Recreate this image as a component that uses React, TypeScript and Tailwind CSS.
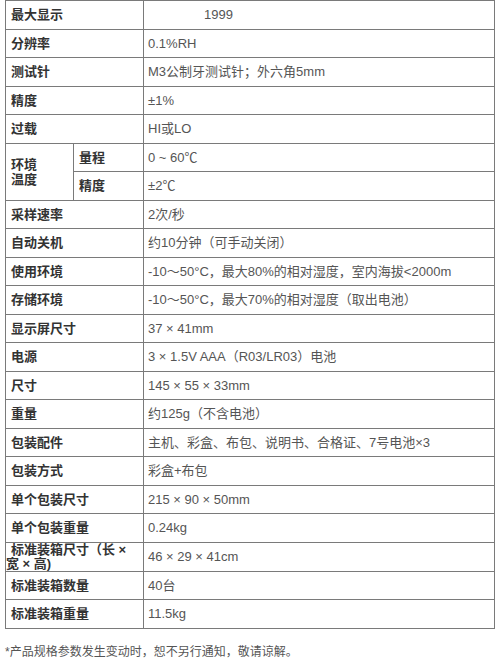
const ROWS: [string, string][] = [
  ['分辨率', '0.1%RH'],
  ['测试针', 'M3公制牙测试针；外六角5mm'],
  ['精度', '±1%'],
  ['过载', 'HI或LO'],
]

const ROWS2: [string, string][] = [
  ['采样速率', '2次/秒'],
  ['自动关机', '约10分钟（可手动关闭）'],
  ['使用环境', '-10～50°C，最大80%的相对湿度，室内海拔<2000m'],
  ['存储环境', '-10～50°C，最大70%的相对湿度（取出电池）'],
  ['显示屏尺寸', '37 × 41mm'],
  ['电源', '3 × 1.5V AAA（R03/LR03）电池'],
  ['尺寸', '145 × 55 × 33mm'],
  ['重量', '约125g（不含电池）'],
  ['包装配件', '主机、彩盒、布包、说明书、合格证、7号电池×3'],
  ['包装方式', '彩盒+布包'],
  ['单个包装尺寸', '215 × 90 × 50mm'],
  ['单个包装重量', '0.24kg'],
]

const ROWS3: [string, string][] = [
  ['标准装箱数量', '40台'],
  ['标准装箱重量', '11.5kg'],
]

const base = 'border border-[#7a7a7a] align-middle'
const th = `${base} pl-[5px] font-bold text-[#333] text-left`
const td = `${base} text-[#555]`

function Row({ label, value }: { label: string; value: string }) {
  return (
    <tr className="h-[28.5px]">
      <td colSpan={2} className={th}>
        {label}
      </td>
      <td className={`${td} pl-[4px]`}>{value}</td>
    </tr>
  )
}

export default function App() {
  return (
    <div className="w-[500px] h-[658px] bg-white overflow-hidden font-['Liberation_Sans','Noto_Sans_CJK_SC',sans-serif] text-[13px]">
      <table className="ml-[5px] w-[490px] border-collapse table-fixed">
        <colgroup>
          <col className="w-[68px]" />
          <col className="w-[70px]" />
          <col />
        </colgroup>
        <tbody>
          <tr className="h-[28.5px]">
            <td colSpan={2} className={th}>
              最大显示
            </td>
            <td className={`${td} pl-[60px]`}>1999</td>
          </tr>
          {ROWS.map(([l, v]) => (
            <Row key={l} label={l} value={v} />
          ))}
          <tr className="h-[28.5px]">
            <td rowSpan={2} className={`${th} leading-[15px]`}>
              环境
              <br />
              温度
            </td>
            <td className={th}>量程</td>
            <td className={`${td} pl-[4px]`}>0 ~ 60℃</td>
          </tr>
          <tr className="h-[28.5px]">
            <td className={th}>精度</td>
            <td className={`${td} pl-[4px]`}>±2℃</td>
          </tr>
          {ROWS2.map(([l, v]) => (
            <Row key={l} label={l} value={v} />
          ))}
          <tr className="h-[28.5px]">
            <td colSpan={2} className={`${base} font-bold text-[#333] text-left leading-[14px]`}>
              <span className="pl-[5px]">标准装箱尺寸（长 ×</span>
              <br />
              宽 × 高)
            </td>
            <td className={`${td} pl-[4px]`}>46 × 29 × 41cm</td>
          </tr>
          {ROWS3.map(([l, v]) => (
            <Row key={l} label={l} value={v} />
          ))}
        </tbody>
      </table>
      <p className="mt-[14px] pl-[5px] text-[12px] text-[#555]">
        *产品规格参数发生变动时，恕不另行通知，敬请谅解。
      </p>
    </div>
  )
}
